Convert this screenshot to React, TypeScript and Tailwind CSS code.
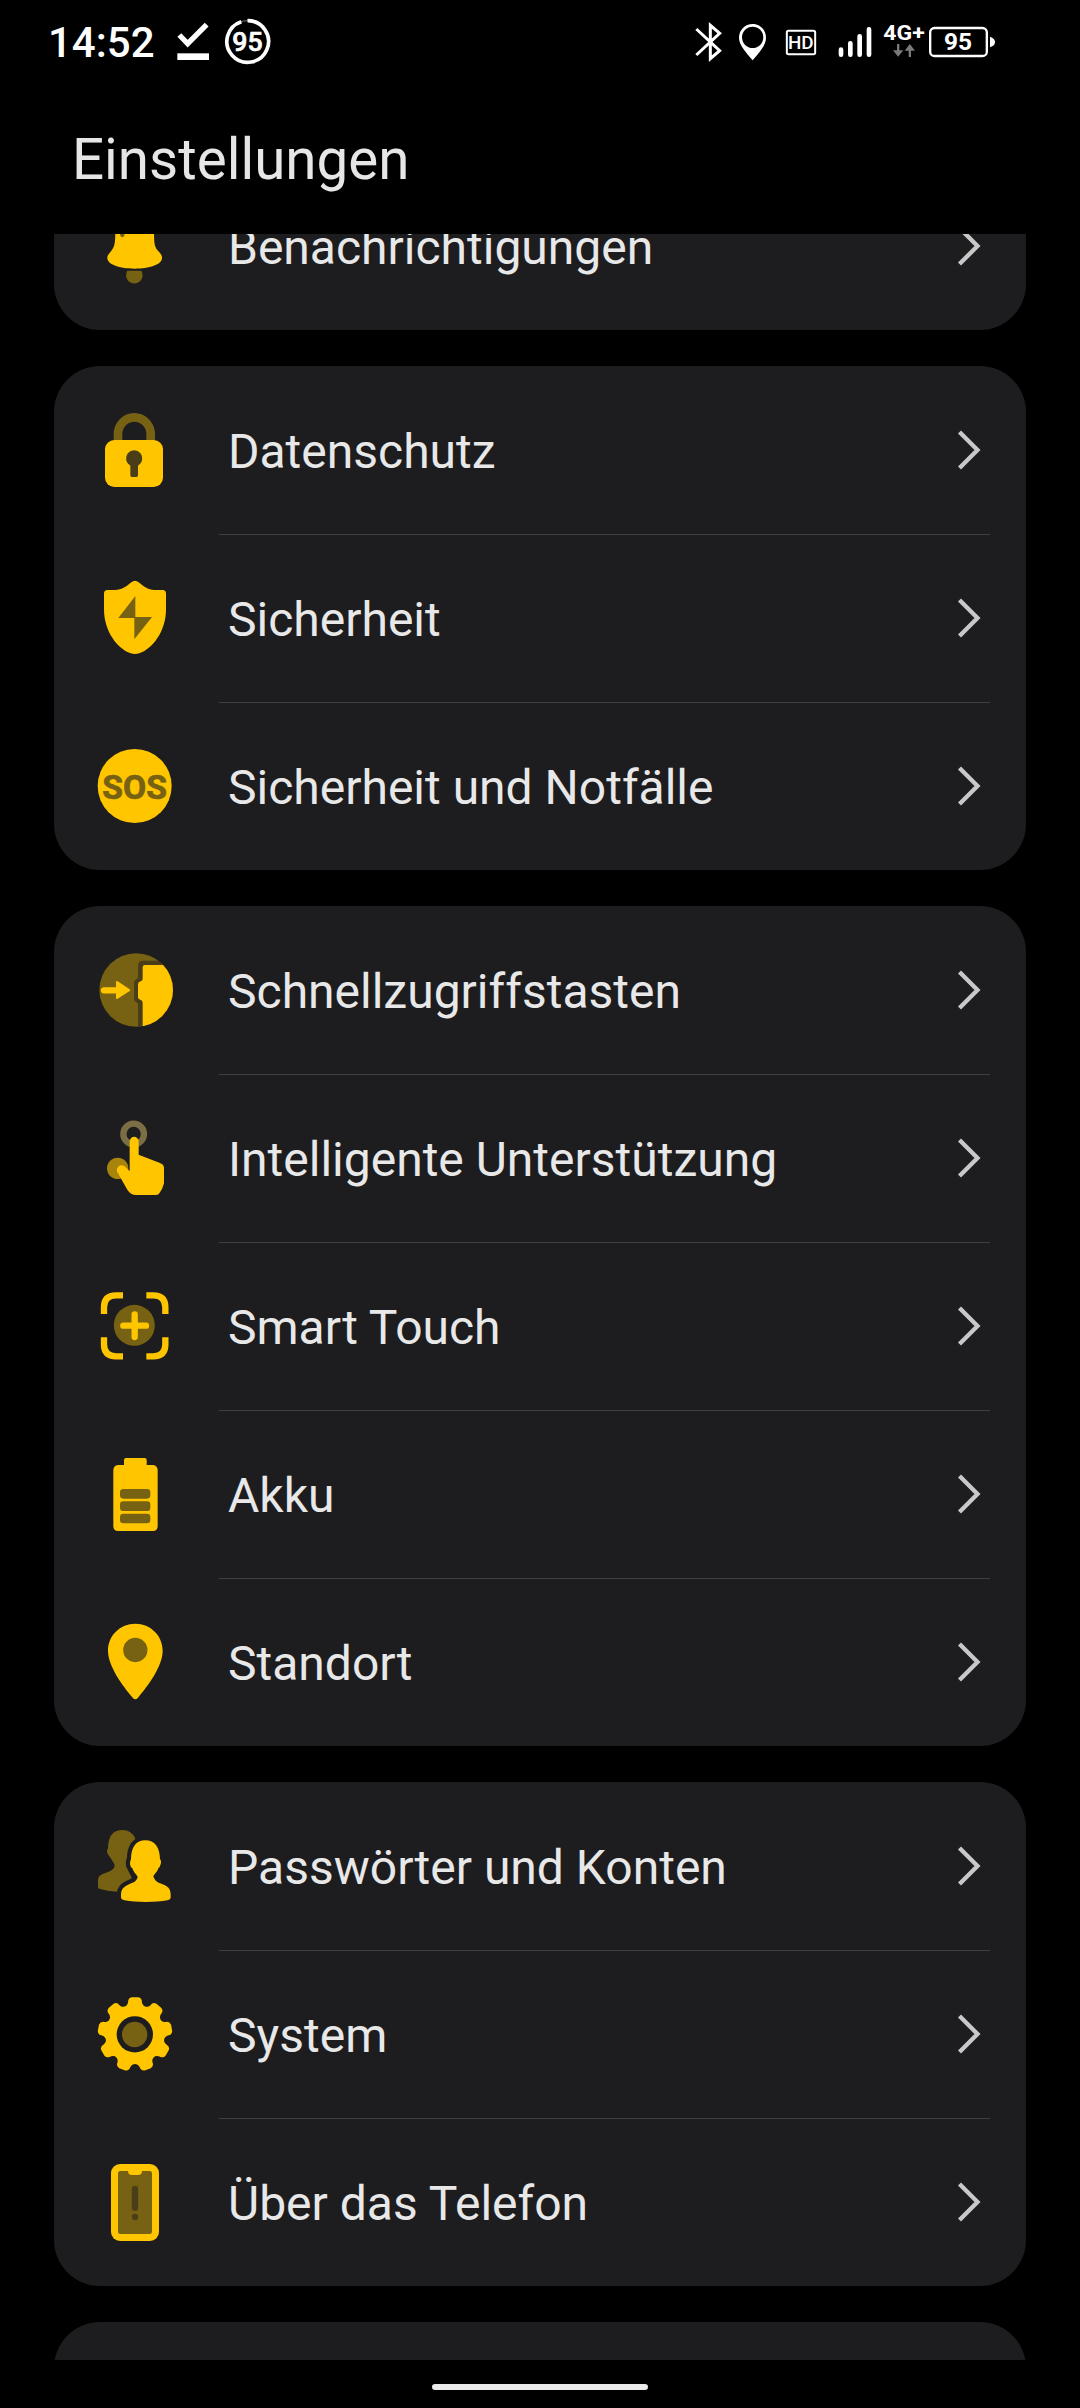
import type { ReactNode } from "react";

const YELLOW = "#ffc600";
const DIM = "#776112";
const DARK = "#4a3e18";
const CARD = "#1d1d1f";

function Icon({ box, children }: { box: string; children: ReactNode }) {
  return (
    <svg viewBox={box} className="ml-[33px] size-24 shrink-0" aria-hidden="true">
      {children}
    </svg>
  );
}

const bell = (
  <Icon box="261 594 288 288">
    <path d="M346 690C346 650 370 632 404 632C438 632 462 650 462 690C462 735 464 740 474 752C482 761 486 765 486 774C486 794 448 806 404 806C360 806 322 794 322 774C322 765 328 760 334 752C343 740 346 735 346 690Z" fill={YELLOW} />
    <path d="M367 650V705" stroke={DIM} strokeWidth="13" strokeLinecap="round" />
    <path d="M382 812H424A25 25 0 1 1 382 812Z" fill={DIM} />
  </Icon>
);

const lock = (
  <Icon box="111 126 288 288">
    <path d="M204 242V222A49 50 0 0 1 302 222V242" fill="none" stroke={DIM} strokeWidth="26" />
    <rect x="165" y="240" width="174" height="141" rx="28" fill={YELLOW} />
    <path d="M241 317A24.5 24.5 0 1 1 264 317V346Q264 351 259 351H246Q241 351 241 346Z" fill={DARK} />
  </Icon>
);

const shield = (
  <Icon box="111 630 288 288">
    <path d="M244 667Q255 658 266 667C282 680 292 689 314 690H338Q348 690 348 701V748C348 815 306 868 268 880Q255 884 242 880C204 868 162 815 162 748V701Q162 690 172 690H194C218 689 228 680 244 667Z" fill={YELLOW} />
    <path d="M256 708V771H306L253 838V774H205Z" fill={DIM} />
  </Icon>
);

const sos = (
  <Icon box="111 234 288 288">
    <circle cx="254" cy="378" r="111" fill={YELLOW} />
    <text x="157" y="417" textLength="194" lengthAdjust="spacingAndGlyphs" fill={DIM} stroke={DIM} strokeWidth="2" className="font-['Roboto'] text-[100px] font-bold">
      SOS
    </text>
  </Icon>
);

const shortcut = (
  <Icon box="111 66 288 288">
    <defs>
      <clipPath id="disc">
        <circle cx="258.500" cy="210" r="110.500" />
      </clipPath>
    </defs>
    <circle cx="258.500" cy="210" r="110.500" fill={DIM} />
    <g clipPath="url(#disc)">
      <path d="M400 122H280Q264 122 264 138V171Q264 176 259 178Q252 181 252 190V236Q252 245 259 247Q264 249 264 254V330H400Z" fill={DARK} />
      <path d="M400 122V135H341L330 122Z" fill={DIM} />
      <path d="M400 135H285Q278 135 278 142V176Q278 183 272 184Q264 186 264 193V232Q264 238 271 239Q278 241 278 248V330H400Z" fill={YELLOW} />
    </g>
    <path d="M162 211H204" stroke={YELLOW} strokeWidth="19" strokeLinecap="round" />
    <path d="M198 186Q198 181 203 184L239 208Q243 211 239 213L203 236Q198 239 198 234Z" fill={YELLOW} />
  </Icon>
);

const hand = (
  <Icon box="111 570 288 288">
    <circle cx="251" cy="642" r="31" fill="none" stroke="#7b6d44" strokeWidth="19" />
    <circle cx="203" cy="745" r="32" fill="#a7850d" />
    <path d="M239 664A13.500 13.500 0 0 1 266 664V704L328 728Q342 733 342 743V790Q338 808 327 821Q323 825 317 825H258Q242 825 232 809L204 760A13.500 13.500 0 0 1 226 741L239 753Z" fill={YELLOW} />
  </Icon>
);

const smartTouch = (
  <Icon box="111 174 288 288">
    <path d="M162 282V262Q162 226 198 226H219M289 226H310Q346 226 346 262V282M346 352V373Q346 409 310 409H289M219 409H198Q162 409 162 373V352" fill="none" stroke={YELLOW} strokeWidth="19" />
    <circle cx="253" cy="316" r="61.500" fill={DIM} />
    <path d="M220 317H288M254 283V351" stroke={YELLOW} strokeWidth="19" strokeLinecap="round" />
  </Icon>
);

const battery = (
  <Icon box="111 18 288 288">
    <path d="M222 75V60Q222 54 228 54H284Q290 54 290 60V75H309Q323 77 323 91V259Q323 273 309 273H204Q190 273 190 259V91Q190 77 204 75Z" fill={YELLOW} />
    <rect x="210" y="147" width="91" height="29" rx="10" fill={DIM} />
    <rect x="210" y="184" width="91" height="29" rx="10" fill={DIM} />
    <rect x="210" y="221" width="91" height="29" rx="10" fill={DIM} />
  </Icon>
);

const location = (
  <Icon box="111 162 288 288">
    <path d="M256 191C302 191 338 227 338 272C338 318 295 376 264 413Q256 423 248 413C217 376 174 318 174 272C174 227 210 191 256 191Z" fill={YELLOW} />
    <circle cx="256" cy="270" r="36.500" fill={DIM} />
  </Icon>
);

const frontPerson =
  "M286 211C314 211 330 232 330 268Q335 272 332 283Q330 291 325 295C322 305 316 310 310 318Q313 332 326 338C344 345 362 348 362 374V382Q362 389 352 391Q325 396 288 396Q250 396 224 391Q213 389 213 382V374C213 350 232 345 248 338Q261 332 263 320C257 312 250 305 247 295Q241 291 240 283Q239 273 243 268C243 232 258 211 286 211Z";

const accounts = (
  <Icon box="111 144 288 288">
    <path d="M216 180C236 180 249 190 255 204L262 240L230 285Q234 305 243 318L250 345L200 365Q172 364 150 357Q144 355 144 350V330C144 310 168 311 182 302Q197 294 193 282C186 271 182 263 177 257Q169 250 171 242L174 234C175 205 184 180 216 180Z" fill={DIM} />
    <path d={frontPerson} fill={CARD} stroke={CARD} strokeWidth="25" />
    <path d={frontPerson} fill={YELLOW} />
  </Icon>
);

// Outline of a cog with nine rounded teeth.
function cogPath(cx: number, cy: number): string {
  const p = (r: number, deg: number) => {
    const a = ((deg - 90) * Math.PI) / 180;
    return `${(cx + r * Math.cos(a)).toFixed(1)} ${(cy + r * Math.sin(a)).toFixed(1)}`;
  };
  let d = `M${p(99, -12)}`;
  for (let i = 0; i < 9; i++) {
    const a = i * 40;
    d += `Q${p(111, a - 11)} ${p(112, a - 5)}L${p(112, a + 5)}Q${p(111, a + 11)} ${p(99, a + 12)}`;
    d += `C${p(86, a + 15)} ${p(86, a + 25)} ${p(99, a + 28)}`;
  }
  return d + "Z";
}

const system = (
  <Icon box="111 648 288 288">
    <path d={cogPath(255, 793)} fill={YELLOW} />
    <circle cx="254.500" cy="793" r="54.500" fill={CARD} />
    <circle cx="254" cy="793.500" r="38" fill={DIM} />
  </Icon>
);

const phone = (
  <Icon box="111 132 288 288">
    <rect x="183" y="162" width="144" height="231" rx="27" fill={YELLOW} />
    <path d="M211 183H234Q234 195 246 195H264Q276 195 276 183H299Q306 183 306 190V365Q306 372 299 372H211Q204 372 204 365V190Q204 183 211 183Z" fill={DIM} />
    <path d="M255 237V293" stroke={DARK} strokeWidth="19" strokeLinecap="round" />
    <circle cx="255" cy="321" r="9.500" fill={DARK} />
  </Icon>
);

type Item = { label: string; icon: ReactNode };

const groups: Item[][] = [
  [{ label: "Benachrichtigungen", icon: bell }],
  [
    { label: "Datenschutz", icon: lock },
    { label: "Sicherheit", icon: shield },
    { label: "Sicherheit und Notfälle", icon: sos },
  ],
  [
    { label: "Schnellzugriffstasten", icon: shortcut },
    { label: "Intelligente Unterstützung", icon: hand },
    { label: "Smart Touch", icon: smartTouch },
    { label: "Akku", icon: battery },
    { label: "Standort", icon: location },
  ],
  [
    { label: "Passwörter und Konten", icon: accounts },
    { label: "System", icon: system },
    { label: "Über das Telefon", icon: phone },
  ],
];

function Row({ label, icon, divided }: Item & { divided: boolean }) {
  return (
    <li className="flex h-[168px] items-center">
      {icon}
      <div className={`ml-9 mr-9 flex h-full flex-1 items-center justify-between border-t pl-[9px] pr-2 ${divided ? "border-[#404042]" : "border-transparent"}`}>
        <span className="whitespace-nowrap pt-[2px] text-[48px] leading-[56px] text-[#e8e8e8]">{label}</span>
        <svg viewBox="0 0 26 44" className="mb-[2px] h-11 w-[26px]" fill="none" stroke="#c8c8c8" strokeWidth="4.300">
          <path d="M3.500 4L21.500 22L3.500 40" />
        </svg>
      </div>
    </li>
  );
}

function StatusBar() {
  return (
    <div className="flex h-[84px] shrink-0 items-start text-white">
      <div className="ml-[48px] w-[128px] whitespace-nowrap text-[42px] font-medium leading-[86px]">14:52</div>
      <svg viewBox="528 0 102 252" className="h-[84px] w-[34px]">
        <path d="M538 105L563 131L620 74" fill="none" stroke="#fff" strokeWidth="16" />
        <rect x="532" y="160" width="95" height="20" fill="#fff" />
      </svg>
      <svg viewBox="672 0 141 252" className="ml-[14px] h-[84px] w-[47px]">
        <circle cx="742.500" cy="124.500" r="62.500" fill="none" stroke="#777" strokeWidth="3" />
        <path d="M742.500 62A62.500 62.500 0 1 1 724 65" fill="none" stroke="#fff" strokeWidth="11" />
        <text x="697" y="153" textLength="91" lengthAdjust="spacingAndGlyphs" fill="#fff" stroke="#fff" strokeWidth="2" className="font-['Roboto'] text-[80px] font-medium">95</text>
      </svg>
      <svg viewBox="108 0 81 252" className="ml-[424px] h-[84px] w-[27px]">
        <path d="M112 87L182 152L154 176V76L182 100L112 165" fill="none" stroke="#fff" strokeWidth="9" />
      </svg>
      <svg viewBox="237 0 87 252" className="ml-4 h-[84px] w-[29px]">
        <path d="M281 72C304 72 321 90 321 113C321 135 303 155 281 181C259 155 240 135 240 113C240 90 258 72 281 72ZM281 80A32 32 0 1 0 281 144A32 32 0 1 0 281 80Z" fill="#fff" fillRule="evenodd" />
      </svg>
      <svg viewBox="378 0 96 252" className="ml-[18px] h-[84px] w-8">
        <rect x="383.500" y="92.500" width="85" height="70" rx="5" fill="none" stroke="#fff" strokeWidth="6" />
        <text x="387" y="147" textLength="77" lengthAdjust="spacingAndGlyphs" fill="#fff" className="font-['Roboto'] text-[55px] font-medium">HD</text>
      </svg>
      <svg viewBox="537 0 102 252" className="ml-[21px] h-[84px] w-[34px]" stroke="#fff" strokeWidth="14" strokeLinecap="round">
        <path d="M546 149V164M574 130V164M602 109V164M630 88V164" />
      </svg>
      <svg viewBox="672 0 126 252" className="ml-[11px] h-[84px] w-[42px]">
        <text x="673" y="119" textLength="124" lengthAdjust="spacingAndGlyphs" fill="#fff" className="font-['Roboto'] text-[60px] font-bold">4G+</text>
        <path d="M714 132H721V151H733L717.500 170L702 151H714ZM749 171V152H737L752.500 132L768 152H756V171Z" fill="#7a7a7a" />
      </svg>
      <svg viewBox="807 0 204 252" className="ml-[3px] h-[84px] w-[68px]">
        <rect x="813.500" y="84" width="170" height="84" rx="13" fill="none" stroke="#fff" strokeWidth="7" />
        <path d="M993 110Q1008 115 1008 126Q1008 137 993 142Z" fill="#fff" />
        <text x="855" y="151" textLength="84" lengthAdjust="spacingAndGlyphs" fill="#fff" className="font-['Roboto'] text-[73px] font-bold">95</text>
      </svg>
    </div>
  );
}

export default function App() {
  return (
    <div className="flex h-[2408px] w-[1080px] flex-col overflow-hidden bg-black font-['Roboto',sans-serif]">
      <StatusBar />
      <header className="flex h-[150px] shrink-0 items-center pl-[72px] pt-[2px]">
        <h1 className="text-[56.5px] leading-[66px] text-[#e6e6e6]">Einstellungen</h1>
      </header>
      <main className="h-[2126px] shrink-0 overflow-hidden">
        <div className="-mt-[72px] flex flex-col gap-9 px-[54px]">
          {groups.map((items) => (
            <ul key={items[0].label} className="rounded-[46px] bg-[#1d1d1f]">
              {items.map((item, i) => (
                <Row key={item.label} label={item.label} icon={item.icon} divided={i > 0} />
              ))}
            </ul>
          ))}
          <div className="h-[168px] rounded-[46px] bg-[#1d1d1f]" />
        </div>
      </main>
      <footer className="flex h-12 shrink-0 items-center justify-center">
        <div className="mt-[6px] h-[6px] w-[216px] rounded-full bg-[#ebebeb]" />
      </footer>
    </div>
  );
}
